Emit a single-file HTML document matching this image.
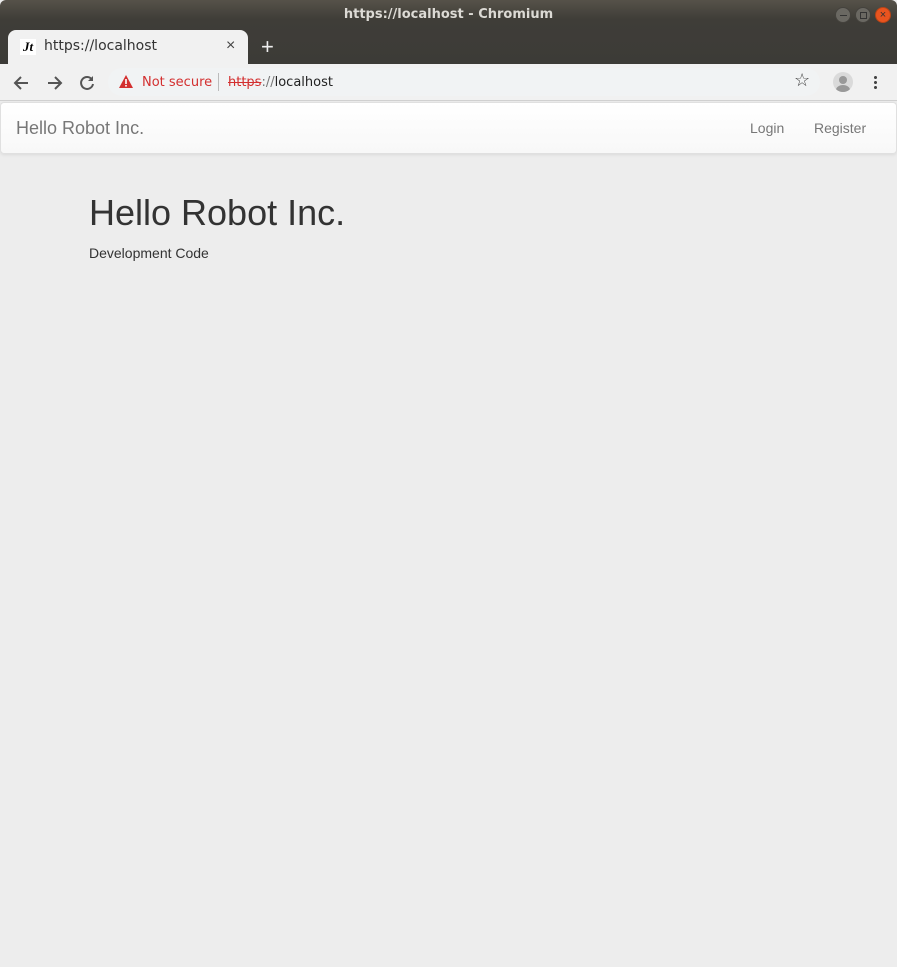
<!DOCTYPE html>
<html><head><style>
*{margin:0;padding:0;box-sizing:border-box}
body{width:897px;height:967px;background:#ededed;font-family:"Liberation Sans",sans-serif;position:relative;overflow:hidden}
.title{position:absolute;top:0;left:0;width:897px;height:64px;background:linear-gradient(#565249,#3f3d38 30%,#3c3b37);border-radius:6px 6px 0 0}
.title .t{position:absolute;top:7px;width:100%;text-align:center;color:#dcdad5;font:bold 13px "DejaVu Sans",sans-serif}
.wb{position:absolute;top:7px;width:16px;height:16px;border-radius:50%;background:#6a6862;border:1px solid #44423d}
.tab{position:absolute;left:8px;top:30px;width:240px;height:34px;background:#f1f1f1;border-radius:8px 8px 0 0}
.tab .l{position:absolute;left:36px;top:8px;font:14px "DejaVu Sans",sans-serif;color:#333}
.tool{position:absolute;top:64px;left:0;width:897px;height:37px;background:#f1f1f1;border-bottom:1px solid #d0d0d0}
.omni{position:absolute;left:108px;top:4px;width:712px;height:28px;background:#f1f3f4;border-radius:14px}
.nav{position:absolute;top:102px;left:0;width:897px;height:52px;background:linear-gradient(#fff,#f8f8f8);border:1px solid #e0e0e0;border-radius:4px;box-shadow:0 1px 3px rgba(0,0,0,.08)}
.nav a{position:absolute;top:17px;color:#777;font-size:14px}
</style></head><body>
<div class="title"><div class="t">https://localhost - Chromium</div>
<div class="wb" style="left:835px"><div style="position:absolute;left:4px;top:7px;width:7px;height:1px;background:#333"></div></div>
<div class="wb" style="left:855px"><div style="position:absolute;left:4px;top:4px;width:7px;height:7px;border:1px solid #333"></div></div>
<div class="wb" style="left:875px;background:#e9541f;border-color:#b84416;color:#333;font-size:11px;text-align:center;line-height:14px">×</div>
<div class="tab"><div style="position:absolute;left:12px;top:9px;width:16px;height:16px;background:#fff;font:italic bold 13px 'Liberation Serif',serif;text-align:center;line-height:16px">Jt</div><div class="l">https://localhost</div><div style="position:absolute;left:218px;top:7px;font-size:16px;color:#444">×</div></div>
<div style="position:absolute;left:261px;top:34px;color:#eee;font-size:22px">+</div>
</div>
<div class="tool">
<svg style="position:absolute;left:12px;top:9px" width="20" height="20" fill="none" stroke="#555" stroke-width="2"><path d="M16 10H4M9 4L3 10l6 6"/></svg>
<svg style="position:absolute;left:44px;top:9px" width="20" height="20" fill="none" stroke="#555" stroke-width="2"><path d="M4 10h12M11 4l6 6-6 6"/></svg>
<svg style="position:absolute;left:77px;top:9px" width="20" height="20" fill="none" stroke="#555" stroke-width="2"><path d="M15 6.5A6 6 0 1 0 16 11"/><path d="M16 3v5h-5" fill="#555" stroke-width="0"/></svg>
<div class="omni">
<svg style="position:absolute;left:10px;top:6px" width="16" height="15"><path d="M8 1L15 14H1z" fill="#d32f2f"/><rect x="7.2" y="5" width="1.6" height="5" fill="#fff"/><rect x="7.2" y="11" width="1.6" height="1.6" fill="#fff"/></svg>
<span style="position:absolute;left:34px;top:7px;font:13px 'DejaVu Sans',sans-serif;color:#d32f2f">Not secure</span>
<div style="position:absolute;left:110px;top:5px;width:1px;height:18px;background:#bbb"></div>
<span style="position:absolute;left:120px;top:7px;font:13px 'DejaVu Sans',sans-serif;color:#222"><s style="color:#d32f2f">https</s><span style="color:#777">://</span>localhost</span>
<span style="position:absolute;left:686px;top:2px;font-size:18px;color:#444">☆</span>
</div>
<div style="position:absolute;left:833px;top:8px;width:20px;height:20px;border-radius:50%;background:#dadada;overflow:hidden"><div style="position:absolute;left:6px;top:4px;width:8px;height:8px;border-radius:50%;background:#999"></div><div style="position:absolute;left:3px;top:13px;width:14px;height:10px;border-radius:50%;background:#999"></div></div>
<div style="position:absolute;left:874px;top:11px;width:3px;height:15px;background:radial-gradient(circle,#444 1.4px,transparent 1.6px) 0 0/3px 5px"></div>
</div>
<div class="nav"><span style="position:absolute;left:15px;top:15px;font-size:18px;color:#777">Hello Robot Inc.</span><a style="left:749px">Login</a><a style="left:813px">Register</a></div>
<h1 style="position:absolute;left:89px;top:192px;font-size:36px;font-weight:normal;color:#333">Hello Robot Inc.</h1>
<p style="position:absolute;left:89px;top:245px;font-size:14px;color:#333">Development Code</p>
</body></html>
